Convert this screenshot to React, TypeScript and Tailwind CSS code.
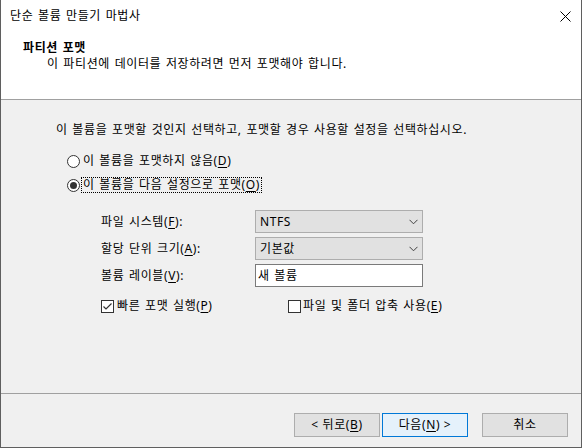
import React from 'react'

function Key({ text, k }: { text: string; k: string }) {
  return (
    <>
      {text}(<span className="underline underline-offset-[2px]">{k}</span>)
    </>
  )
}

function Radio({ checked }: { checked?: boolean }) {
  return (
    <span className="grid h-[13px] w-[13px] shrink-0 place-items-center rounded-full border border-[#333333] bg-white">
      {checked && <span className="h-[7px] w-[7px] rounded-full bg-[#333333]" />}
    </span>
  )
}

function Check({ checked }: { checked?: boolean }) {
  return (
    <span className="grid h-[13px] w-[13px] shrink-0 place-items-center border border-[#333333] bg-white">
      {checked && (
        <svg width="11" height="11" viewBox="0 0 11 11">
          <path d="M1.5 5.5 L4 8 L9.5 2.5" fill="none" stroke="#333333" strokeWidth="1.2" />
        </svg>
      )}
    </span>
  )
}

function Combo({ value }: { value: string }) {
  return (
    <div className="flex h-[23px] items-center justify-between border border-[#adadad] bg-[#e1e1e1] pl-[4px] pr-[4px]">
      <span>{value}</span>
      <svg width="9" height="6" viewBox="0 0 9 6">
        <path d="M0.5 0.8 L4.5 4.8 L8.5 0.8" fill="none" stroke="#404040" strokeWidth="1" />
      </svg>
    </div>
  )
}

export default function App() {
  return (
    <div className="flex h-[448px] w-[582px] flex-col border-x border-b border-[#5f5f5f] bg-[#f0f0f0] font-['Noto_Sans','Noto_Sans_CJK_KR',sans-serif] text-[12px] leading-[16px] tracking-[0.6px] text-black [word-spacing:1px]">
      <header className="h-[100px] shrink-0 border-b border-[#a0a0a0] bg-white">
        <div className="flex h-[32px] items-center justify-between pl-[9px] pr-[10px]">
          <span>단순 볼륨 만들기 마법사</span>
          <svg width="11" height="11" viewBox="0 0 11 11">
            <path d="M0.5 0.5 L10.5 10.5 M10.5 0.5 L0.5 10.5" stroke="#000" strokeWidth="1" />
          </svg>
        </div>
        <div className="pl-[22px] pt-[8px]">
          <p className="font-bold">파티션 포맷</p>
          <p className="pl-[24px]">이 파티션에 데이터를 저장하려면 먼저 포맷해야 합니다.</p>
        </div>
      </header>

      <main className="flex-1">
        <p className="pl-[55px] pt-[22px]">이 볼륨을 포맷할 것인지 선택하고, 포맷할 경우 사용할 설정을 선택하십시오.</p>

        <div className="mt-[15px] flex flex-col gap-[8px] pl-[66px]">
          <label className="flex h-[16px] items-center gap-[1px]">
            <Radio />
            <span className="border border-transparent px-px leading-[14px]">
              이 볼륨을 포맷하지 않음<Key text="" k="D" />
            </span>
          </label>
          <label className="flex h-[16px] items-center gap-[1px]">
            <Radio checked />
            <span className="border border-dotted border-black px-px leading-[14px]">
              이 볼륨을 다음 설정으로 포맷<Key text="" k="O" />
            </span>
          </label>
        </div>

        <div className="mt-[17px] flex flex-col gap-[4px] pl-[100px]">
          <div className="grid grid-cols-[154px_168px] items-center">
            <span>
              <Key text="파일 시스템" k="F" />:
            </span>
            <Combo value="NTFS" />
          </div>
          <div className="grid grid-cols-[154px_168px] items-center">
            <span>
              <Key text="할당 단위 크기" k="A" />:
            </span>
            <Combo value="기본값" />
          </div>
          <div className="grid grid-cols-[154px_168px] items-center">
            <span>
              <Key text="볼륨 레이블" k="V" />:
            </span>
            <div className="flex h-[23px] items-center border border-[#7a7a7a] bg-white pl-[2px]">새 볼륨</div>
          </div>
        </div>

        <div className="mt-[11px] flex h-[16px] items-center pl-[100px]">
          <label className="flex w-[187px] items-center gap-[3px]">
            <Check checked />
            <span>
              <Key text="빠른 포맷 실행" k="P" />
            </span>
          </label>
          <label className="flex items-center gap-[2px]">
            <Check />
            <span>
              <Key text="파일 및 폴더 압축 사용" k="E" />
            </span>
          </label>
        </div>
      </main>

      <footer className="flex h-[54px] shrink-0 justify-end border-t border-[#a0a0a0] pr-[13px] pt-[19px]">
        <button className="h-[24px] w-[86px] border border-[#adadad] bg-[#e1e1e1]">
          &lt; <Key text="뒤로" k="B" />
        </button>
        <button className="ml-[2px] h-[24px] w-[86px] border border-[#0078d7] bg-[#e5f1fb]">
          <Key text="다음" k="N" /> &gt;
        </button>
        <button className="ml-[14px] h-[24px] w-[86px] border border-[#adadad] bg-[#e1e1e1]">취소</button>
      </footer>
    </div>
  )
}
